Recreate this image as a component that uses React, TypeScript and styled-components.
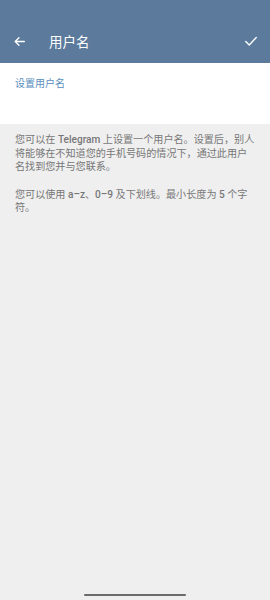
import React from "react";
import styled, { createGlobalStyle } from "styled-components";

const Global = createGlobalStyle`
  html, body { margin: 0; padding: 0; background: #efefef; }
  body { font-family: Roboto, "Noto Sans CJK SC", sans-serif; }
`;

const Page = styled.div`
  width: 270px;
  height: 600px;
  display: flex;
  flex-direction: column;
  background: #efefef;
  position: relative;
  overflow: hidden;
`;

const Header = styled.div`
  height: 63px;
  background: #5b7a9c;
  display: flex;
  align-items: flex-end;
  padding: 0 12px 10px 12px;
  box-sizing: border-box;
  color: #fff;
`;

const HeaderRow = styled.div`
  display: flex;
  align-items: center;
  width: 100%;
  height: 24px;
`;

const IconBtn = styled.div`
  width: 14px;
  height: 14px;
  display: flex;
  align-items: center;
  justify-content: center;
`;

const Title = styled.div`
  margin-left: 23px;
  font-size: 13.5px;
  flex: 1;
  font-family: "Noto Sans CJK SC", sans-serif;
`;

const InputSection = styled.div`
  height: 61px;
  background: #fff;
  padding: 12px 15px 0;
  box-sizing: border-box;
`;

const Placeholder = styled.div`
  font-size: 10px;
  color: #5a8dbd;
  font-family: "Noto Sans CJK SC", sans-serif;
`;

const Info = styled.div`
  padding: 9px 5px 0 15px;
  color: #777;
  font-size: 10.1px;
  line-height: 13.5px;
  font-family: Roboto, "Noto Sans CJK SC", sans-serif;
  b { font-weight: 500; }
`;

const Para = styled.p`
  margin: 0 0 14px;
`;

const HomeBar = styled.div`
  position: absolute;
  left: 84px;
  bottom: 4px;
  width: 102px;
  height: 2.5px;
  border-radius: 2px;
  background: #6b6b6b;
`;

export default function App() {
  return (
    <Page>
      <Global />
      <Header>
        <HeaderRow>
          <IconBtn>
            <svg width="13" height="13" viewBox="0 0 24 24" fill="none" stroke="#fff" strokeWidth="2.4" strokeLinecap="round" strokeLinejoin="round">
              <path d="M21 12H4M11 5l-7 7 7 7" />
            </svg>
          </IconBtn>
          <Title>用户名</Title>
          <IconBtn>
            <svg width="14" height="14" viewBox="0 0 24 24" fill="none" stroke="#fff" strokeWidth="2.4" strokeLinecap="round" strokeLinejoin="round">
              <path d="M3 13l6 6L21 6" />
            </svg>
          </IconBtn>
        </HeaderRow>
      </Header>
      <InputSection>
        <Placeholder>设置用户名</Placeholder>
      </InputSection>
      <Info>
        <Para>
          您可以在 <b>Telegram</b> 上设置一个用户名。设置后，别人
          <br />
          将能够在不知道您的手机号码的情况下，通过此用户
          <br />
          名找到您并与您联系。
        </Para>
        <Para>
          您可以使用 <b>a–z</b>、<b>0–9</b> 及下划线。最小长度为 <b>5</b> 个字
          <br />
          符。
        </Para>
      </Info>
      <HomeBar />
    </Page>
  );
}
